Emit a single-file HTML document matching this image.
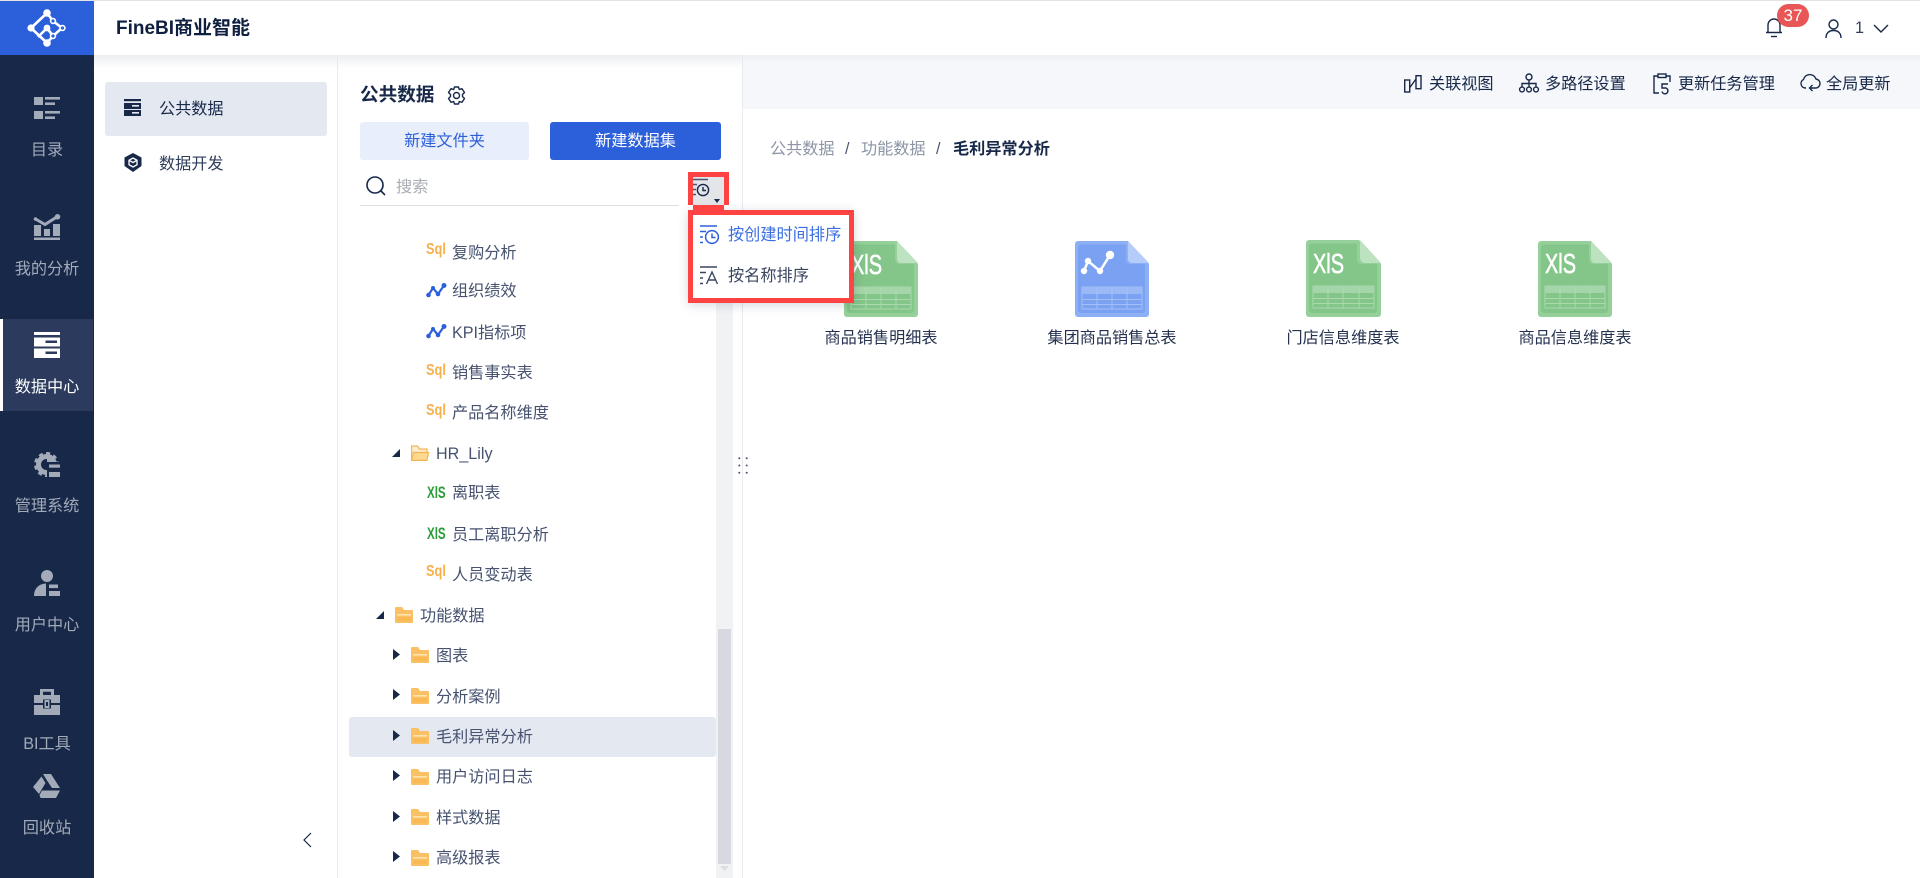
<!DOCTYPE html>
<html lang="zh-CN">
<head>
<meta charset="utf-8">
<title>FineBI</title>
<style>
html,body{margin:0;padding:0;background:#fff}
body{position:relative;width:1920px;height:878px;overflow:hidden;font-family:"Liberation Sans","Noto Sans CJK SC",sans-serif;color:#172849}
.a{position:absolute}
.t{position:absolute;font-size:16.15px;line-height:24px;white-space:nowrap;margin-top:-1px}
.c{transform:translateX(-50%)}
svg{position:absolute;display:block;overflow:visible}
.n{color:#a3aab8}
.d{color:#465270}
.sql{position:absolute;left:426px;color:#f8b04c;font:bold 16px/16px "Liberation Sans",sans-serif;transform-origin:0 0;transform:scale(.8,1);white-space:nowrap}
.xls{position:absolute;left:427px;color:#2a9c37;font:bold 17px/17px "Liberation Sans",sans-serif;transform-origin:0 0;transform:scale(.68,1);white-space:nowrap}
</style>
</head>
<body>
<!-- top bar -->
<div class="a" style="left:0;top:0;width:1920px;height:1px;background:#e3e3e3"></div>
<div class="a" style="left:94px;top:55px;width:1826px;height:14px;background:linear-gradient(#eceef2,#fff)"></div>
<div class="a" style="left:0;top:1px;width:94px;height:54px;background:#2c60db"></div>
<svg style="left:0;top:2px" width="94" height="54" viewBox="0 0 94 54">
<g stroke="#fff" stroke-width="2.6" fill="none">
<path d="M47 11 L31 26 L47 41 M47 26 L38 35 M47 26 L53 34 L47 41 M47 11 L53 19 L62 26 L53 34"/>
</g>
<g fill="#fff"><circle cx="47" cy="11" r="3.800"/><circle cx="31" cy="26" r="3.600"/><circle cx="47" cy="41" r="3.800"/><circle cx="47" cy="26" r="3.400"/></g>
<g fill="#2c60db" stroke="#fff" stroke-width="1.600"><circle cx="53" cy="19" r="2.400"/><circle cx="62.500" cy="26" r="2.400"/><circle cx="53" cy="34" r="2.400"/></g>
</svg>
<div class="t" style="left:116px;top:17px;margin-top:0;font-size:19px;font-weight:bold;color:#0f1f40">FineBI商业智能</div>

<!-- sidebar -->
<div class="a" style="left:0;top:55px;width:94px;height:823px;background:#172849"></div>
<div class="a" style="left:3px;top:319px;width:90px;height:92px;background:#2b3a5d"></div>
<div class="a" style="left:0;top:319px;width:3px;height:92px;background:#fff"></div>

<svg style="left:34px;top:97px" width="26" height="22" fill="#a3aab8">
<rect width="9" height="8"/><rect x="11" width="15" height="2.600"/><rect x="11" y="5.400" width="10" height="2.600"/>
<rect y="14" width="9" height="8"/><rect x="11" y="14" width="15" height="2.600"/><rect x="11" y="19.400" width="10" height="2.600"/>
</svg>
<div class="t n c" style="left:47px;top:139px">目录</div>

<svg style="left:34px;top:214px" width="26" height="26" fill="#a3aab8">
<rect x="0" y="11" width="7" height="11"/><rect x="10" y="15" width="6" height="7"/><rect x="19" y="10" width="7" height="12"/><rect y="23.500" width="26" height="2.500"/>
<path d="M1.500 5 L11 10.500 L23.500 2.500" fill="none" stroke="#a3aab8" stroke-width="3"/><circle cx="23.500" cy="2.800" r="2.800"/><circle cx="1.500" cy="5" r="1.800"/>
</svg>
<div class="t n c" style="left:47px;top:258px">我的分析</div>

<svg style="left:34px;top:332px" width="26" height="26" fill="#fff">
<rect width="26" height="3"/>
<path fill-rule="evenodd" d="M0 5.500H26V14.500H0Z M11.500 8.500V11H23V8.500Z"/>
<path fill-rule="evenodd" d="M0 16.500H26V26H0Z M11.500 19.500V22H23V19.500Z"/>
</svg>
<div class="t c" style="left:47px;top:376px;color:#fff">数据中心</div>

<svg style="left:34px;top:452px" width="26" height="26" fill="#a3aab8">
<circle cx="12.500" cy="12.500" r="8" fill="none" stroke="#a3aab8" stroke-width="5"/>
<circle cx="12.500" cy="12.500" r="11" fill="none" stroke="#a3aab8" stroke-width="3" stroke-dasharray="4 3.300"/>
<rect x="13" y="10" width="13" height="16" fill="#172849"/>
<rect x="15" y="12.500" width="11" height="3.200"/><rect x="15" y="20" width="11" height="5"/>
<rect x="13" y="3" width="5" height="7" fill="#a3aab8"/>
</svg>
<div class="t n c" style="left:47px;top:495px">管理系统</div>

<svg style="left:34px;top:570px" width="26" height="26" fill="#a3aab8">
<circle cx="13" cy="6" r="6"/>
<path d="M0 26 C0 19 4 14 12 13.500 V26Z"/>
<rect x="15" y="14.500" width="9" height="3.600"/><rect x="15" y="21" width="11" height="5"/>
</svg>
<div class="t n c" style="left:47px;top:614px">用户中心</div>

<svg style="left:34px;top:689px" width="26" height="26" fill="#a3aab8">
<path fill-rule="evenodd" d="M6 6V0H20V6H17V2.800H9V6Z"/>
<path d="M0 6H26V14H17V10.500H9V14H0Z"/><path d="M0 16H9V19.500H17V16H26V26H0Z"/>
<path fill-rule="evenodd" d="M10.500 11H15.500V19H10.500Z M12 13V17H14V13Z"/>
</svg>
<div class="t n c" style="left:47px;top:733px">BI工具</div>

<svg style="left:33px;top:774px" width="28" height="24" fill="#a3aab8">
<path d="M10 0H18L27 14H19L14 6.500 Z"/>
<path d="M8.500 2.500 L12.500 9 L6 20 L0 13Z"/>
<path d="M9 16.500H27L23 24H7.500L6.500 21Z"/>
</svg>
<div class="t n c" style="left:47px;top:817px">回收站</div>

<!-- second panel -->
<div class="a" style="left:337px;top:55px;width:1px;height:823px;background:#e8eaef"></div>
<div class="a" style="left:105px;top:82px;width:222px;height:54px;background:#e4e8f0;border-radius:3px"></div>
<svg style="left:124px;top:99px" width="17" height="17" fill="#172849">
<rect width="17" height="2.200"/>
<path fill-rule="evenodd" d="M0 4H17V10H0Z M8 6V7.600H15V6Z"/>
<path fill-rule="evenodd" d="M0 11H17V17H0Z M8 13V14.600H15V13Z"/>
</svg>
<div class="t" style="left:159px;top:98px;color:#172849">公共数据</div>
<svg style="left:124px;top:153px" width="18" height="19">
<path d="M9 0 L17.500 4.500 V13 L9 19 L0.500 13 V4.500Z" fill="#172849"/>
<path d="M9 5 L13 7.300 V11.700 L9 14 L5 11.700 V7.300Z M5 7.300 L9 9.500 L13 7.300" fill="none" stroke="#fff" stroke-width="1.300"/>
</svg>
<div class="t" style="left:159px;top:153px;color:#2f3d59">数据开发</div>
<svg style="left:302px;top:832px" width="10" height="16"><path d="M9 1 L2 8 L9 15" fill="none" stroke="#172849" stroke-width="1.200"/></svg>

<!-- third panel -->
<div class="a" style="left:742px;top:55px;width:1px;height:823px;background:#e8eaef"></div>
<div class="t" style="left:360px;top:83px;margin-top:0;font-size:18.600px;font-weight:bold;color:#172849">公共数据</div>
<svg style="left:447px;top:86px" width="19" height="19" viewBox="0 0 19 19" fill="none" stroke="#172849" stroke-width="1.400">
<path d="M7.500 1 H11.500 L12.300 3.500 L15 2.700 L17.500 6.500 L15.500 8.500 V10.500 L17.500 12.500 L15 16.300 L12.300 15.500 L11.500 18 H7.500 L6.700 15.500 L4 16.300 L1.500 12.500 L3.500 10.500 V8.500 L1.500 6.500 L4 2.700 L6.700 3.500Z" stroke-linejoin="round"/>
<circle cx="9.500" cy="9.500" r="3"/>
</svg>
<div class="a" style="left:360px;top:122px;width:169px;height:38px;background:#e8eefb;border-radius:3px"></div>
<div class="t c" style="left:444.500px;top:130px;color:#2c60db">新建文件夹</div>
<div class="a" style="left:550px;top:122px;width:171px;height:38px;background:#2c60db;border-radius:3px"></div>
<div class="t c" style="left:635.500px;top:130px;color:#fff">新建数据集</div>
<svg style="left:366px;top:176px" width="20" height="20" fill="none" stroke="#172849" stroke-width="1.600"><circle cx="9" cy="9" r="8"/><path d="M15 15 L19 19"/></svg>
<div class="t" style="left:396px;top:176px;color:#a9adb5">搜索</div>
<div class="a" style="left:360px;top:205px;width:319px;height:1px;background:#dcdfe5"></div>

<!-- scrollbar -->
<div class="a" style="left:716px;top:210px;width:17px;height:668px;background:#f1f2f4"></div>
<div class="a" style="left:718px;top:629px;width:13px;height:235px;background:#d6d9df"></div>
<svg style="left:720px;top:866px" width="9" height="6"><path d="M0 0H9L4.500 5Z" fill="#dcdee2"/></svg>

<!-- tree -->
<div class="a" style="left:340px;top:218px;width:376px;height:20px;overflow:hidden">
<div class="t d" style="left:112px;top:-18px">销售数据分析报表</div>
</div>

<div class="sql" style="top:242px">Sql</div>
<div class="t d" style="left:452px;top:241px;margin-top:0">复购分析</div>

<svg style="left:426px;top:283px" width="20" height="15"><path d="M2.500 12 L7 5 L12 11 L18 2.500" fill="none" stroke="#2c60db" stroke-width="2.200"/><g fill="#2c60db"><circle cx="2.500" cy="12" r="2.300"/><circle cx="7" cy="5" r="2"/><circle cx="12" cy="11" r="2.300"/><circle cx="18" cy="2.500" r="2.500"/></g></svg>
<div class="t d" style="left:452px;top:280px">组织绩效</div>

<svg style="left:426px;top:324px" width="20" height="15"><path d="M2.500 12 L7 5 L12 11 L18 2.500" fill="none" stroke="#2c60db" stroke-width="2.200"/><g fill="#2c60db"><circle cx="2.500" cy="12" r="2.300"/><circle cx="7" cy="5" r="2"/><circle cx="12" cy="11" r="2.300"/><circle cx="18" cy="2.500" r="2.500"/></g></svg>
<div class="t d" style="left:452px;top:321px;margin-top:0">KPI指标项</div>

<div class="sql" style="top:363px">Sql</div>
<div class="t d" style="left:452px;top:362px">销售事实表</div>

<div class="sql" style="top:403px">Sql</div>
<div class="t d" style="left:452px;top:402px">产品名称维度</div>

<svg style="left:392px;top:449px" width="8" height="8"><path d="M8 0V8H0Z" fill="#172849"/></svg>
<svg style="left:411px;top:445px" width="18" height="16"><path d="M.6 15.400V1 H6.500 L8.500 4 H16 V7" fill="#fdeccb" stroke="#f5b556" stroke-width="1.200"/><path d="M.6 15.400 L2.500 7.500 H17.500 L16 15.400Z" fill="#fdd98f" stroke="#f5b556" stroke-width="1.200"/></svg>
<div class="t d" style="left:436px;top:442px;margin-top:0">HR_Lily</div>

<div class="xls" style="top:484px">XlS</div>
<div class="t d" style="left:452px;top:482px">离职表</div>
<div class="xls" style="top:525px">XlS</div>
<div class="t d" style="left:452px;top:524px">员工离职分析</div>
<div class="sql" style="top:564px">Sql</div>
<div class="t d" style="left:452px;top:564px">人员变动表</div>

<svg style="left:376px;top:611px" width="8" height="8"><path d="M8 0V8H0Z" fill="#172849"/></svg>
<svg style="left:395px;top:607px" width="18" height="16"><path d="M0 1 A1 1 0 0 1 1 0 H7 L9 3 H17 A1 1 0 0 1 18 4 V15 A1 1 0 0 1 17 16 H1 A1 1 0 0 1 0 15Z" fill="#fac063"/><rect x="2" y="7" width="14" height="1.600" fill="#fde3ae"/><rect x="2" y="10" width="14" height="4" fill="#f9b954"/></svg>
<div class="t d" style="left:420px;top:605px">功能数据</div>

<div class="a" style="left:349px;top:717px;width:367px;height:40px;background:#e4e8f0;border-radius:3px"></div>

<svg style="left:393px;top:649px" width="7" height="11"><path d="M0 0L7 5.500L0 11Z" fill="#172849"/></svg>
<svg style="left:411px;top:647px" width="18" height="16"><path d="M0 1 A1 1 0 0 1 1 0 H7 L9 3 H17 A1 1 0 0 1 18 4 V15 A1 1 0 0 1 17 16 H1 A1 1 0 0 1 0 15Z" fill="#fac063"/><rect x="2" y="7" width="14" height="1.600" fill="#fde3ae"/><rect x="2" y="10" width="14" height="4" fill="#f9b954"/></svg>
<div class="t d" style="left:436px;top:645px">图表</div>

<svg style="left:393px;top:689px" width="7" height="11"><path d="M0 0L7 5.500L0 11Z" fill="#172849"/></svg>
<svg style="left:411px;top:688px" width="18" height="16"><path d="M0 1 A1 1 0 0 1 1 0 H7 L9 3 H17 A1 1 0 0 1 18 4 V15 A1 1 0 0 1 17 16 H1 A1 1 0 0 1 0 15Z" fill="#fac063"/><rect x="2" y="7" width="14" height="1.600" fill="#fde3ae"/><rect x="2" y="10" width="14" height="4" fill="#f9b954"/></svg>
<div class="t d" style="left:436px;top:686px">分析案例</div>

<svg style="left:393px;top:730px" width="7" height="11"><path d="M0 0L7 5.500L0 11Z" fill="#172849"/></svg>
<svg style="left:411px;top:728px" width="18" height="16"><path d="M0 1 A1 1 0 0 1 1 0 H7 L9 3 H17 A1 1 0 0 1 18 4 V15 A1 1 0 0 1 17 16 H1 A1 1 0 0 1 0 15Z" fill="#fac063"/><rect x="2" y="7" width="14" height="1.600" fill="#fde3ae"/><rect x="2" y="10" width="14" height="4" fill="#f9b954"/></svg>
<div class="t d" style="left:436px;top:726px">毛利异常分析</div>

<svg style="left:393px;top:770px" width="7" height="11"><path d="M0 0L7 5.500L0 11Z" fill="#172849"/></svg>
<svg style="left:411px;top:769px" width="18" height="16"><path d="M0 1 A1 1 0 0 1 1 0 H7 L9 3 H17 A1 1 0 0 1 18 4 V15 A1 1 0 0 1 17 16 H1 A1 1 0 0 1 0 15Z" fill="#fac063"/><rect x="2" y="7" width="14" height="1.600" fill="#fde3ae"/><rect x="2" y="10" width="14" height="4" fill="#f9b954"/></svg>
<div class="t d" style="left:436px;top:766px">用户访问日志</div>

<svg style="left:393px;top:811px" width="7" height="11"><path d="M0 0L7 5.500L0 11Z" fill="#172849"/></svg>
<svg style="left:411px;top:809px" width="18" height="16"><path d="M0 1 A1 1 0 0 1 1 0 H7 L9 3 H17 A1 1 0 0 1 18 4 V15 A1 1 0 0 1 17 16 H1 A1 1 0 0 1 0 15Z" fill="#fac063"/><rect x="2" y="7" width="14" height="1.600" fill="#fde3ae"/><rect x="2" y="10" width="14" height="4" fill="#f9b954"/></svg>
<div class="t d" style="left:436px;top:807px">样式数据</div>

<svg style="left:393px;top:851px" width="7" height="11"><path d="M0 0L7 5.500L0 11Z" fill="#172849"/></svg>
<svg style="left:411px;top:850px" width="18" height="16"><path d="M0 1 A1 1 0 0 1 1 0 H7 L9 3 H17 A1 1 0 0 1 18 4 V15 A1 1 0 0 1 17 16 H1 A1 1 0 0 1 0 15Z" fill="#fac063"/><rect x="2" y="7" width="14" height="1.600" fill="#fde3ae"/><rect x="2" y="10" width="14" height="4" fill="#f9b954"/></svg>
<div class="t d" style="left:436px;top:847px">高级报表</div>

<!-- drag handle -->
<svg style="left:738px;top:457px" width="10" height="18" fill="#4a566f"><circle cx="1.300" cy="1.300" r="1"/><circle cx="8.700" cy="1.300" r="1"/><circle cx="1.300" cy="8.500" r="1"/><circle cx="8.700" cy="8.500" r="1"/><circle cx="1.300" cy="15.700" r="1"/><circle cx="8.700" cy="15.700" r="1"/></svg>

<!-- right toolbar -->
<div class="a" style="left:743px;top:55px;width:1177px;height:54px;background:linear-gradient(#eef0f5 0,#f5f7fb 8px,#f5f7fb 100%)"></div>
<svg style="left:1404px;top:75px" width="18" height="18" fill="none" stroke="#172849" stroke-width="1.400"><rect x=".7" y="5" width="5" height="12"/><rect x="12" y=".7" width="5" height="13"/><path d="M5.500 13 L12 4"/></svg>
<div class="t" style="left:1429px;top:73px">关联视图</div>
<svg style="left:1519px;top:73px" width="20" height="20" fill="none" stroke="#172849" stroke-width="1.400"><circle cx="10" cy="4" r="3"/><circle cx="3" cy="16.500" r="2.400"/><circle cx="10" cy="16.500" r="2.400"/><circle cx="17" cy="16.500" r="2.400"/><path d="M10 7V14M3 14V10.500H17V14"/></svg>
<div class="t" style="left:1545px;top:73px">多路径设置</div>
<svg style="left:1653px;top:73px" width="18" height="21" fill="none" stroke="#172849" stroke-width="1.400"><path d="M5 3H1V20H6M13 3H17V9"/><rect x="5" y="1" width="8" height="3.500"/><path d="M15 11H9V15H13A3 3 0 1 1 9 18.500"/></svg>
<div class="t" style="left:1678px;top:73px">更新任务管理</div>
<svg style="left:1800px;top:73px" width="20" height="20" fill="none" stroke="#172849" stroke-width="1.400"><path d="M6 15 H5 A4.500 4.500 0 0 1 3.500 6.500 A6.500 6.500 0 0 1 16 6 A4.500 4.500 0 0 1 15 15 H10"/><path d="M12.500 12 L9.500 15 L12.500 18"/></svg>
<div class="t" style="left:1826px;top:73px">全局更新</div>

<!-- header right -->
<svg style="left:1765px;top:17px" width="18" height="21" fill="none" stroke="#172849" stroke-width="1.400"><path d="M1 15.500 H17 M3 15.500 V8 A6 6 0 0 1 15 8 V15.500"/><path d="M6 19.500H12"/></svg>
<div class="a" style="left:1777px;top:4px;width:32px;height:23px;background:#e85656;border-radius:12px"></div>
<div class="t c" style="left:1793px;top:4px;margin-top:0;color:#fff;font-size:17px">37</div>
<svg style="left:1825px;top:19px" width="17" height="20" fill="none" stroke="#172849" stroke-width="1.400"><circle cx="8.500" cy="5.500" r="4.500"/><path d="M1 19 C1 14 4 11.500 8.500 11.500 C13 11.500 16 14 16 19"/></svg>
<div class="t" style="left:1855px;top:16px;margin-top:0;color:#2f3d59">1</div>
<svg style="left:1873px;top:24px" width="16" height="9" fill="none" stroke="#172849" stroke-width="1.400"><path d="M1 1 L8 8 L15 1"/></svg>

<!-- breadcrumb -->
<div class="t" style="left:770px;top:138px;color:#8c94a5">公共数据</div>
<div class="t" style="left:845px;top:138px;color:#4a566f">/</div>
<div class="t" style="left:861px;top:138px;color:#8c94a5">功能数据</div>
<div class="t" style="left:936px;top:138px;color:#4a566f">/</div>
<div class="t" style="left:953px;top:138px;font-weight:bold;color:#172849">毛利异常分析</div>

<!-- files -->
<svg style="left:844px;top:241px" width="74" height="76">
<path d="M3 0H53L74 23V73A3 3 0 0 1 71 76H3A3 3 0 0 1 0 73V3A3 3 0 0 1 3 0Z" fill="#95d09b"/>
<path d="M6 3.500H51V19A4 4 0 0 0 55 23H70V69A3 3 0 0 1 67 72H6A3 3 0 0 1 3 69V6.500A3 3 0 0 1 6 3.500Z" fill="#84c589"/>
<path d="M53 0V18A4 4 0 0 0 57 22H74Z" fill="#bde2bf"/>
<text x="7" y="33" font-family="Liberation Sans,sans-serif" font-size="28" fill="#fff" stroke="#fff" stroke-width=".6" textLength="31" lengthAdjust="spacingAndGlyphs">XlS</text>
<rect x="7" y="46" width="60" height="22" fill="none" stroke="#aad9ae" stroke-width="1"/><rect x="7" y="46" width="60" height="7" fill="#a5d6a9"/>
<path d="M7 58.500H67M7 63.500H67M22 46V68M37 46V68M52 46V68" stroke="#aad9ae" stroke-width="1" fill="none"/>
</svg>
<div class="t c" style="left:881px;top:327px;color:#25324f">商品销售明细表</div>

<svg style="left:1075px;top:241px" width="74" height="76">
<path d="M3 0H53L74 23V73A3 3 0 0 1 71 76H3A3 3 0 0 1 0 73V3A3 3 0 0 1 3 0Z" fill="#8db0f5"/>
<path d="M6 3.500H51V19A4 4 0 0 0 55 23H70V69A3 3 0 0 1 67 72H6A3 3 0 0 1 3 69V6.500A3 3 0 0 1 6 3.500Z" fill="#7aa1f2"/>
<path d="M53 0V18A4 4 0 0 0 57 22H74Z" fill="#b5cbf9"/>
<path d="M9 30L13 20L25 30L35 14" fill="none" stroke="#fff" stroke-width="2.500"/><g fill="#fff"><circle cx="9" cy="30" r="3.200"/><circle cx="13" cy="20" r="3.200"/><circle cx="25" cy="30" r="3.200"/><circle cx="35" cy="14" r="4.200"/></g>
<rect x="7" y="46" width="60" height="22" fill="none" stroke="#a3bff6" stroke-width="1"/><rect x="7" y="46" width="60" height="7" fill="#9ab9f6"/>
<path d="M7 58.500H67M7 63.500H67M22 46V68M37 46V68M52 46V68" stroke="#a3bff6" stroke-width="1" fill="none"/>
</svg>
<div class="t c" style="left:1112px;top:327px;color:#25324f">集团商品销售总表</div>

<svg style="left:1306px;top:240px" width="75" height="77">
<path d="M3 0H53L75 24V74A3 3 0 0 1 72 77H3A3 3 0 0 1 0 74V3A3 3 0 0 1 3 0Z" fill="#95d09b"/>
<path d="M6 3.500H51V19A4 4 0 0 0 55 24H71V70A3 3 0 0 1 68 73H6A3 3 0 0 1 3 70V6.500A3 3 0 0 1 6 3.500Z" fill="#84c589"/>
<path d="M54 0V18A5 5 0 0 0 59 23H75Z" fill="#bde2bf"/>
<text x="7" y="33" font-family="Liberation Sans,sans-serif" font-size="28" fill="#fff" stroke="#fff" stroke-width=".6" textLength="31" lengthAdjust="spacingAndGlyphs">XlS</text>
<rect x="7" y="46" width="61" height="22" fill="none" stroke="#aad9ae" stroke-width="1"/><rect x="7" y="46" width="61" height="7" fill="#a5d6a9"/>
<path d="M7 58.500H68M7 63.500H68M22 46V68M37 46V68M53 46V68" stroke="#aad9ae" stroke-width="1" fill="none"/>
</svg>
<div class="t c" style="left:1343px;top:327px;color:#25324f">门店信息维度表</div>

<svg style="left:1538px;top:241px" width="74" height="76">
<path d="M3 0H53L74 23V73A3 3 0 0 1 71 76H3A3 3 0 0 1 0 73V3A3 3 0 0 1 3 0Z" fill="#95d09b"/>
<path d="M6 3.500H51V19A4 4 0 0 0 55 23H70V69A3 3 0 0 1 67 72H6A3 3 0 0 1 3 69V6.500A3 3 0 0 1 6 3.500Z" fill="#84c589"/>
<path d="M53 0V18A4 4 0 0 0 57 22H74Z" fill="#bde2bf"/>
<text x="7" y="32" font-family="Liberation Sans,sans-serif" font-size="28" fill="#fff" stroke="#fff" stroke-width=".6" textLength="31" lengthAdjust="spacingAndGlyphs">XlS</text>
<rect x="7" y="45" width="60" height="22" fill="none" stroke="#aad9ae" stroke-width="1"/><rect x="7" y="45" width="60" height="7" fill="#a5d6a9"/>
<path d="M7 57.500H67M7 62.500H67M22 45V67M37 45V67M52 45V67" stroke="#aad9ae" stroke-width="1" fill="none"/>
</svg>
<div class="t c" style="left:1575px;top:327px;color:#25324f">商品信息维度表</div>

<!-- sort button + menu with red highlight -->
<div class="a" style="left:688px;top:172px;width:31px;height:28px;border:5px solid #ff4343;background:#e3e5e9;border-bottom:none"></div>
<svg style="left:693px;top:178px" width="28" height="26" fill="none" stroke="#3a4560" stroke-width="1.400">
<path d="M0 1.500H15M0 6.500H4M0 11.500H3M0 16.500H3" stroke="#4a566f"/><circle cx="10" cy="12" r="5.600" stroke="#172849"/><path d="M10 9V12.500H13" stroke="#172849"/><path d="M21 21H27L24 25Z" fill="#172849" stroke="none"/>
</svg>
<div class="a" style="left:688px;top:210px;width:156px;height:83px;border:5px solid #ff4343;background:#fff;box-shadow:0 2px 10px rgba(30,40,70,.18)"></div>
<div class="a" style="left:693px;top:205px;width:31px;height:5px;background:#ff4343"></div>
<svg style="left:700px;top:225px" width="20" height="20" fill="none" stroke="#2c60db" stroke-width="1.500">
<path d="M0 1H17M0 6.500H6M0 12H3M0 17.500H3"/><circle cx="12" cy="12" r="6.400"/><path d="M12 8.500V12.500H15.500"/>
</svg>
<div class="t" style="left:728px;top:224px;color:#3b6fe0;font-size:16.200px">按创建时间排序</div>
<svg style="left:700px;top:266px" width="20" height="19" fill="none" stroke="#3a4560" stroke-width="1.400">
<path d="M0 1H17M0 6.500H6M0 12H3M0 17.500H3"/><path d="M6.500 18L12 6L17.500 18M8.500 14H15.500"/>
</svg>
<div class="t" style="left:728px;top:265px;color:#3a4560;font-size:16.200px">按名称排序</div>
</body>
</html>
